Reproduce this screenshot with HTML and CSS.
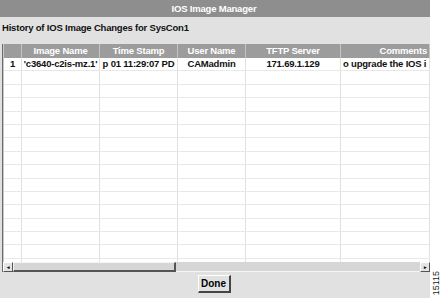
FILE: index.html
```html
<!DOCTYPE html>
<html lang="en">
<head>
  <meta charset="UTF-8" />
  <title>IOS Image Manager</title>
  <link rel="stylesheet" href="styles.css">
</head>
<body>
  <div class="page">
    <div class="window">
      <div class="titlebar">IOS Image Manager</div>
      <div class="caption">History of IOS Image Changes for SysCon1</div>

      <div class="table-frame">
        <div class="grid">
          <div class="row head">
            <div class="cell"></div>
            <div class="cell">Image Name</div>
            <div class="cell">Time Stamp</div>
            <div class="cell">User Name</div>
            <div class="cell">TFTP Server</div>
            <div class="cell right">Comments</div>
          </div>
          <div class="body">
            <div class="row">
              <div class="cell">1</div>
              <div class="cell">'c3640-c2is-mz.1'</div>
              <div class="cell">p 01 11:29:07 PD</div>
              <div class="cell">CAMadmin</div>
              <div class="cell">171.69.1.129</div>
              <div class="cell left">o upgrade the IOS i</div>
            </div>
            <div class="row"><div class="cell"></div><div class="cell"></div><div class="cell"></div><div class="cell"></div><div class="cell"></div><div class="cell"></div></div>
            <div class="row"><div class="cell"></div><div class="cell"></div><div class="cell"></div><div class="cell"></div><div class="cell"></div><div class="cell"></div></div>
            <div class="row"><div class="cell"></div><div class="cell"></div><div class="cell"></div><div class="cell"></div><div class="cell"></div><div class="cell"></div></div>
            <div class="row"><div class="cell"></div><div class="cell"></div><div class="cell"></div><div class="cell"></div><div class="cell"></div><div class="cell"></div></div>
            <div class="row"><div class="cell"></div><div class="cell"></div><div class="cell"></div><div class="cell"></div><div class="cell"></div><div class="cell"></div></div>
            <div class="row"><div class="cell"></div><div class="cell"></div><div class="cell"></div><div class="cell"></div><div class="cell"></div><div class="cell"></div></div>
            <div class="row"><div class="cell"></div><div class="cell"></div><div class="cell"></div><div class="cell"></div><div class="cell"></div><div class="cell"></div></div>
            <div class="row"><div class="cell"></div><div class="cell"></div><div class="cell"></div><div class="cell"></div><div class="cell"></div><div class="cell"></div></div>
            <div class="row"><div class="cell"></div><div class="cell"></div><div class="cell"></div><div class="cell"></div><div class="cell"></div><div class="cell"></div></div>
            <div class="row"><div class="cell"></div><div class="cell"></div><div class="cell"></div><div class="cell"></div><div class="cell"></div><div class="cell"></div></div>
            <div class="row"><div class="cell"></div><div class="cell"></div><div class="cell"></div><div class="cell"></div><div class="cell"></div><div class="cell"></div></div>
            <div class="row"><div class="cell"></div><div class="cell"></div><div class="cell"></div><div class="cell"></div><div class="cell"></div><div class="cell"></div></div>
            <div class="row"><div class="cell"></div><div class="cell"></div><div class="cell"></div><div class="cell"></div><div class="cell"></div><div class="cell"></div></div>
            <div class="row"><div class="cell"></div><div class="cell"></div><div class="cell"></div><div class="cell"></div><div class="cell"></div><div class="cell"></div></div>
            <div class="row"><div class="cell"></div><div class="cell"></div><div class="cell"></div><div class="cell"></div><div class="cell"></div><div class="cell"></div></div>
          </div>
        </div>

        <div class="hscroll">
          <div class="arrow">&#9666;</div>
          <div class="thumb"></div>
          <div class="track"></div>
          <div class="arrow">&#9656;</div>
        </div>
      </div>

      <div class="buttons">
        <button class="btn">Done</button>
      </div>
    </div>

    <div class="side">
      <span class="fig">15115</span>
    </div>
  </div>
</body>
</html>
```

FILE: styles.css
```css
body {
  margin: 0;
  padding: 0;
  background: #fff;
  font-family: "Liberation Sans", Arial, sans-serif;
  font-size: 9.5px;
  font-weight: bold;
  letter-spacing: -0.2px;
  color: #111;
}

.page {
  display: flex;
  width: 442px;
  height: 298px;
}

.window {
  width: 430px;
  height: 298px;
  background: #e1e1e1;
  display: flex;
  flex-direction: column;
}

.titlebar {
  height: 17px;
  line-height: 17px;
  background: #8e8e8e;
  color: #fff;
  text-align: center;
  padding-right: 2px;
}

.caption {
  height: 27px;
  padding: 5px 0 0 2px;
  box-sizing: border-box;
  line-height: 12px;
}

.table-frame {
  height: 228px;
  margin-left: 2px;
  display: flex;
  flex-direction: column;
  border-left: 1px solid #6a6a6a;
}

.grid {
  flex: 1;
  overflow: hidden;
  background: #fff;
  border-left: 1px solid #c8c8c8;
}

.row {
  display: grid;
  grid-template-columns: 18px 78px 78px 68px 95px 1fr;
  height: 13.4px;
  border-bottom: 1px solid #e8e8e8;
  box-sizing: border-box;
}

.body {
  height: 204px;
  overflow: hidden;
}

.cell {
  overflow: hidden;
  white-space: nowrap;
  display: flex;
  justify-content: center;
  align-items: center;
  border-right: 1px solid #e0e0e0;
  line-height: 12px;
}

.cell.left {
  justify-content: flex-start;
  padding-left: 2px;
}

.cell.right {
  justify-content: flex-end;
  padding-right: 2px;
}

.row.head {
  height: 14px;
  background: #9c9c9c;
  color: #fff;
  border-bottom: none;
}

.row.head .cell {
  border-right: 1px solid #c4c4c4;
}

.hscroll {
  height: 10px;
  display: flex;
  background: #d6d6d6;
}

.arrow {
  width: 10px;
  height: 10px;
  box-sizing: border-box;
  background: #e4e4e4;
  border-top: 1px solid #fff;
  border-left: 1px solid #fff;
  border-right: 1px solid #555;
  border-bottom: 1px solid #555;
  font-size: 5px;
  line-height: 8px;
  text-align: center;
  color: #000;
}

.thumb {
  width: 163px;
  height: 10px;
  box-sizing: border-box;
  background: #d6d6d6;
  border-top: 1px solid #f4f4f4;
  border-left: 1px solid #f4f4f4;
  border-right: 2px solid #555;
  border-bottom: 2px solid #555;
}

.track {
  flex: 1;
  border-bottom: 1px solid #f4f4f4;
}

.buttons {
  flex: 1;
  display: flex;
  justify-content: center;
  align-items: flex-start;
  padding-top: 3px;
  padding-right: 2px;
}

.btn {
  width: 33px;
  height: 18px;
  padding: 0;
  background: #e1e1e1;
  font-family: "Liberation Sans", Arial, sans-serif;
  font-size: 10px;
  font-weight: bold;
  color: #000;
  border-top: 1px solid #fff;
  border-left: 1px solid #fff;
  border-right: 2px solid #444;
  border-bottom: 2px solid #444;
}

.side {
  flex: 1;
  display: flex;
  align-items: flex-end;
  justify-content: center;
  padding-bottom: 3px;
}

.fig {
  writing-mode: vertical-rl;
  transform: rotate(180deg);
  font-weight: normal;
  letter-spacing: 0;
  font-size: 9px;
  color: #222;
}
```
